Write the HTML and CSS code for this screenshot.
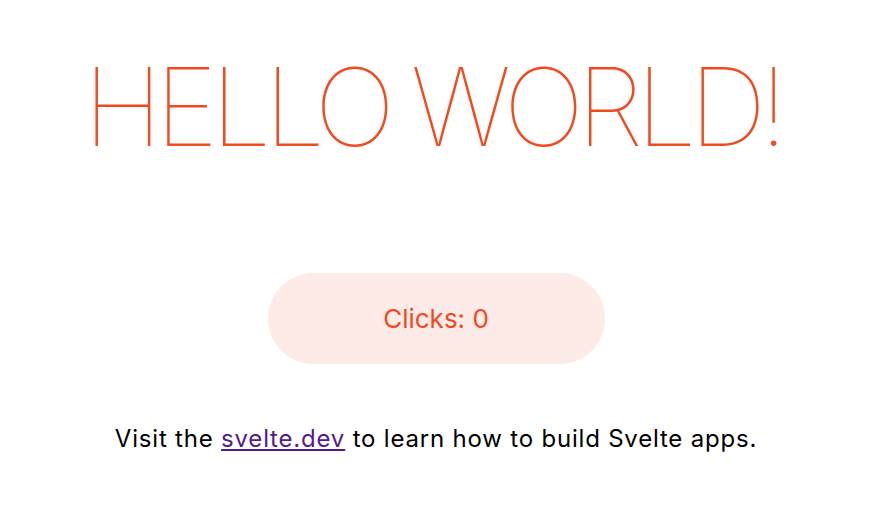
FILE: index.html
```html
<!DOCTYPE html>
<html>
<head>
<meta charset="utf-8">
<link rel="stylesheet" href="styles.css">
</head>
<body>
<main class="app">
  <h1 class="title">Hello World!</h1>
  <button class="counter">Clicks: 0</button>
  <p class="info">Visit the <a class="link" href="#">svelte.dev</a> to learn how to build Svelte apps.</p>
</main>
</body>
</html>
```
FILE: styles.css
```css
html, body {
  margin: 0;
  padding: 0;
  background: #ffffff;
}
body {
  font-family: Inter, "Liberation Sans", sans-serif;
  color: #000;
}
.app {
  display: flex;
  flex-direction: column;
  align-items: center;
  padding: 0 8px 0 0;
}
.title {
  margin: 42px 8px 0 0;
  font-family: Inter, "Liberation Sans", sans-serif;
  font-weight: 100;
  font-size: 108px;
  line-height: 130px;
  color: #f24a1f;
  text-transform: uppercase;
  letter-spacing: -7.4px;
}
.counter {
  margin-top: 101px;
  width: 337px;
  height: 91px;
  border: none;
  border-radius: 46px;
  background: #fcebe6;
  color: #f24a1f;
  font-family: Inter, "Liberation Sans", sans-serif;
  font-size: 26px;
}
.info {
  margin: 60px 0 0;
  font-size: 24px;
  line-height: 30px;
  letter-spacing: 0.8px;
}
.link {
  color: #551a8b;
}
```
